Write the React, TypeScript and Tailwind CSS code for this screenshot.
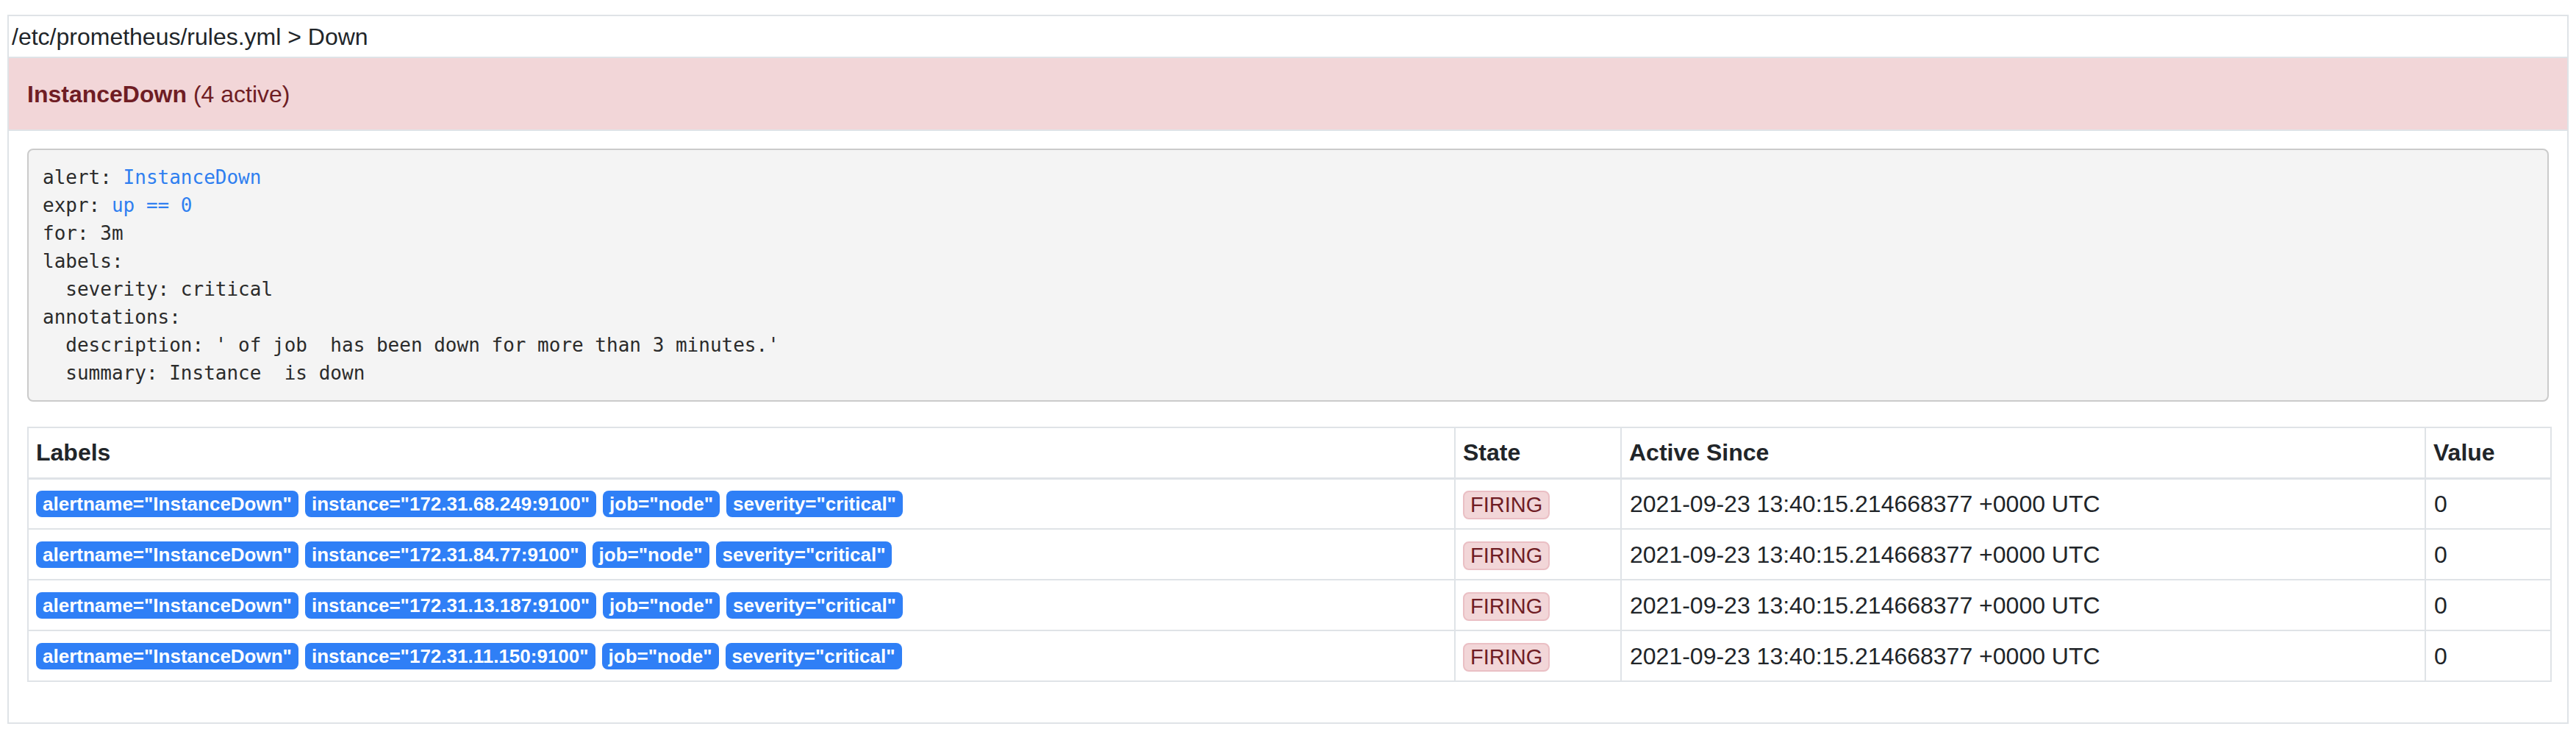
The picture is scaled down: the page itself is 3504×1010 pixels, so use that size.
import React from 'react';

interface Alert {
  instance: string;
  activeSince: string;
  value: string;
}

const alerts: Alert[] = [
  { instance: '172.31.68.249:9100', activeSince: '2021-09-23 13:40:15.214668377 +0000 UTC', value: '0' },
  { instance: '172.31.84.77:9100', activeSince: '2021-09-23 13:40:15.214668377 +0000 UTC', value: '0' },
  { instance: '172.31.13.187:9100', activeSince: '2021-09-23 13:40:15.214668377 +0000 UTC', value: '0' },
  { instance: '172.31.11.150:9100', activeSince: '2021-09-23 13:40:15.214668377 +0000 UTC', value: '0' },
];

const LabelBadge: React.FC<{ text: string }> = ({ text }) => (
  <span className="inline-block rounded-[8px] bg-[#2f7ff6] px-[9px] py-[5px] text-[26px] font-bold leading-[26px] text-white whitespace-nowrap">
    {text}
  </span>
);

const CodeBlock: React.FC = () => (
  <pre
    className="mb-[34px] rounded-[8px] border-2 border-[#cbcbcb] bg-[#f4f4f4] px-[19px] py-[18px] text-[26px] leading-[38px] text-[#2b2b2b] whitespace-pre"
    style={{ fontFamily: '"DejaVu Sans Mono", "Liberation Mono", monospace' }}
  >
    <div>alert: <span className="text-[#2f7ff0]">InstanceDown</span></div>
    <div>expr: <span className="text-[#2f7ff0]">up == 0</span></div>
    <div>for: 3m</div>
    <div>labels:</div>
    <div>  severity: critical</div>
    <div>annotations:</div>
    <div>  description: ' of job  has been down for more than 3 minutes.'</div>
    <div>  summary: Instance  is down</div>
  </pre>
);

export default function App() {
  return (
    <div
      className="min-h-screen bg-white px-[10px] pt-[20px] text-[32px] text-[#212529]"
      style={{ fontFamily: '"Liberation Sans", Arial, sans-serif' }}
    >
      <div className="border-2 border-[#dfe3e7]">
        <div className="flex h-[57px] items-center border-b-2 border-[#dfe3e7] px-[4px] leading-[48px]">
          /etc/prometheus/rules.yml &gt; Down
        </div>
        <div className="flex h-[99px] items-center border-b-2 border-[#dfe3e7] bg-[#f2d6d8] px-[25px] text-[#6f1d24]">
          <span className="font-bold">InstanceDown</span>
          <span className="ml-[9px]">(4 active)</span>
        </div>

        <div className="px-[25px] pt-[24px] pb-[55px]">
          <CodeBlock />

          <table className="w-full table-fixed border-collapse">
            <colgroup>
              <col className="w-[1941px]" />
              <col className="w-[226px]" />
              <col className="w-[1094px]" />
              <col className="w-[171px]" />
            </colgroup>
            <thead>
              <tr>
                {['Labels', 'State', 'Active Since', 'Value'].map((h) => (
                  <th
                    key={h}
                    className="h-[69px] border-2 border-b-[3px] border-[#dfe3e7] px-[10px] text-left align-middle font-bold leading-[48px]"
                  >
                    {h}
                  </th>
                ))}
              </tr>
            </thead>
            <tbody>
              {alerts.map((a) => (
                <tr key={a.instance}>
                  <td className="h-[69px] border-2 border-[#dfe3e7] px-[10px] align-middle">
                    <div className="flex gap-[9px]">
                      <LabelBadge text='alertname="InstanceDown"' />
                      <LabelBadge text={`instance="${a.instance}"`} />
                      <LabelBadge text='job="node"' />
                      <LabelBadge text='severity="critical"' />
                    </div>
                  </td>
                  <td className="border-2 border-[#dfe3e7] px-[10px] align-middle">
                    <span className="inline-block rounded-[8px] border-2 border-[#eabfc4] bg-[#f2d6d8] px-[8px] py-[3px] text-[29px] leading-[29px] text-[#6f1d24]">
                      FIRING
                    </span>
                  </td>
                  <td className="border-2 border-[#dfe3e7] px-[11px] align-middle leading-[48px]">{a.activeSince}</td>
                  <td className="border-2 border-[#dfe3e7] px-[11px] align-middle leading-[48px]">{a.value}</td>
                </tr>
              ))}
            </tbody>
          </table>
        </div>
      </div>
    </div>
  );
}
